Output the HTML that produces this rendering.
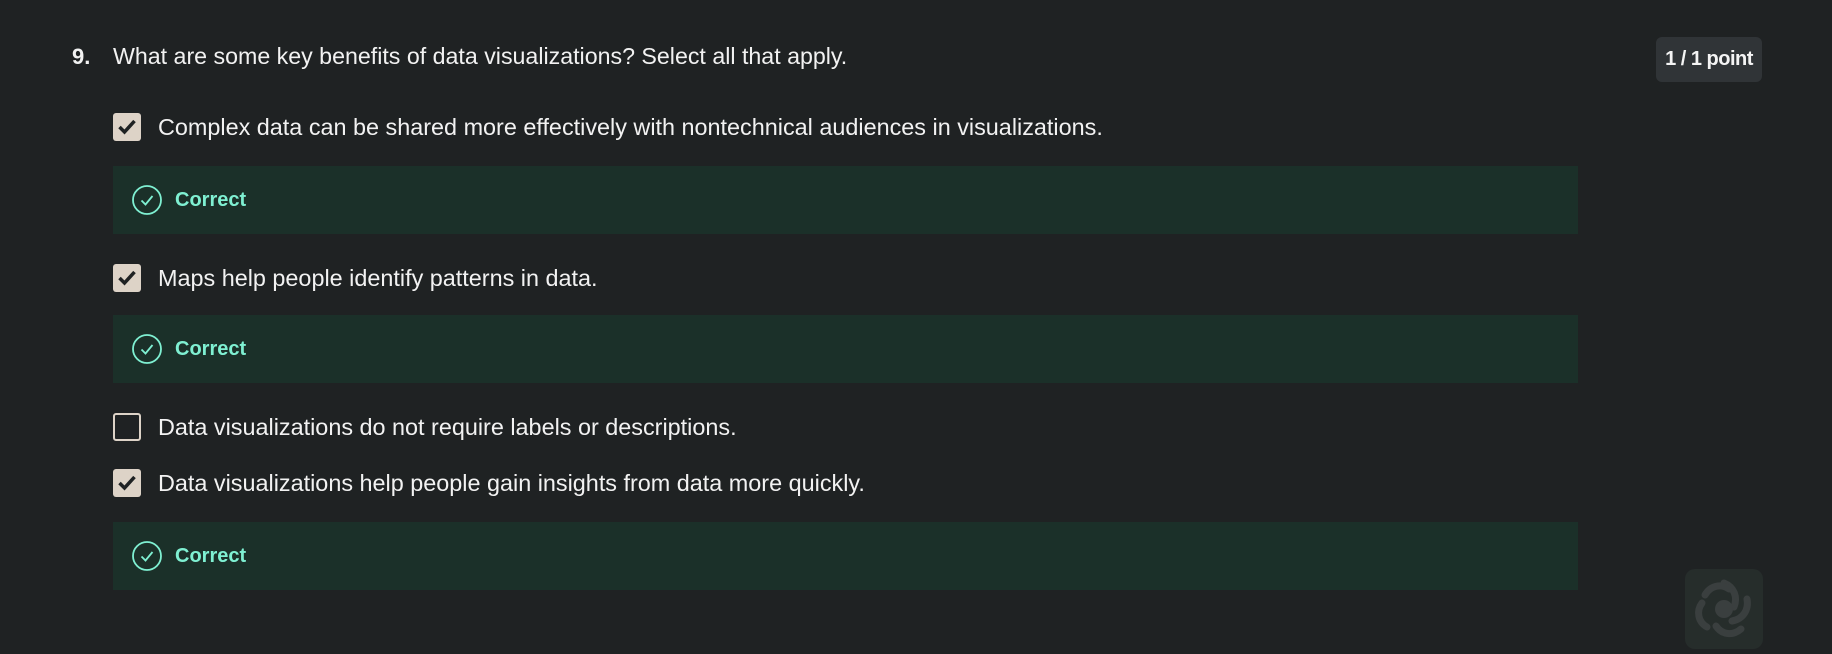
<!DOCTYPE html>
<html><head><meta charset="utf-8"><style>
html,body{margin:0;padding:0;}
body{width:1832px;height:636px;background:#1f2223;position:relative;overflow:hidden;font-family:"Liberation Sans",sans-serif;color:#f2f2f2;}
.a{position:absolute;}
.q{font-size:23.2px;line-height:30px;}
.num{left:72px;top:42px;font-weight:bold;font-size:22px;line-height:30px;}
.cb{left:113px;width:28px;height:28px;border-radius:3px;box-sizing:border-box;}
.cb.on{background:#ddd3c7;}
.cb.off{border:2.5px solid #ddd3c7;}
.opt{left:158px;font-size:23.4px;line-height:30px;}
.box{left:113px;width:1465px;height:68px;background:#1b3029;}
.box svg{position:absolute;left:18px;top:18px;}
.box span{position:absolute;left:62px;top:20px;font-size:20px;font-weight:bold;color:#7ff0d2;line-height:28px;}
.badge{left:1656px;top:37px;width:106px;height:45px;background:#303437;border-radius:6px;font-weight:bold;font-size:20px;line-height:45px;text-align:center;color:#f4f4f4;letter-spacing:-0.5px;}
.logo{left:1685px;top:569px;width:78px;height:80px;background:#262d2b;border-radius:10px;}
</style></head><body>
<div class="a num">9.</div>
<div class="a q" style="left:113px;top:41px;">What are some key benefits of data visualizations? Select all that apply.</div>
<div class="a badge">1 / 1 point</div>

<div class="a cb on" style="top:113px;"><svg width="28" height="28"><path d="M6.5 14l5 5 10-11" stroke="#1f2223" stroke-width="3.5" fill="none"/></svg></div>
<div class="a opt" style="top:112px;">Complex data can be shared more effectively with nontechnical audiences in visualizations.</div>
<div class="a box" style="top:166px;"><svg width="32" height="32"><circle cx="16" cy="16" r="14" stroke="#7ff0d2" stroke-width="1.8" fill="none"/><path d="M10.5 16.5l4 4 7-8.5" stroke="#7ff0d2" stroke-width="1.8" fill="none"/></svg><span>Correct</span></div>

<div class="a cb on" style="top:264px;"><svg width="28" height="28"><path d="M6.5 14l5 5 10-11" stroke="#1f2223" stroke-width="3.5" fill="none"/></svg></div>
<div class="a opt" style="top:263px;">Maps help people identify patterns in data.</div>
<div class="a box" style="top:315px;"><svg width="32" height="32"><circle cx="16" cy="16" r="14" stroke="#7ff0d2" stroke-width="1.8" fill="none"/><path d="M10.5 16.5l4 4 7-8.5" stroke="#7ff0d2" stroke-width="1.8" fill="none"/></svg><span>Correct</span></div>

<div class="a cb off" style="top:413px;"></div>
<div class="a opt" style="top:412px;">Data visualizations do not require labels or descriptions.</div>

<div class="a cb on" style="top:469px;"><svg width="28" height="28"><path d="M6.5 14l5 5 10-11" stroke="#1f2223" stroke-width="3.5" fill="none"/></svg></div>
<div class="a opt" style="top:468px;">Data visualizations help people gain insights from data more quickly.</div>
<div class="a box" style="top:522px;"><svg width="32" height="32"><circle cx="16" cy="16" r="14" stroke="#7ff0d2" stroke-width="1.8" fill="none"/><path d="M10.5 16.5l4 4 7-8.5" stroke="#7ff0d2" stroke-width="1.8" fill="none"/></svg><span>Correct</span></div>

<div class="a logo"><svg width="78" height="80" viewBox="0 0 78 80"><g stroke="#3a3f3f" stroke-width="7" fill="none" stroke-linecap="round"><path d="M39 14c10 4 14 14 10 24"/><path d="M62 30c2 11-4 20-15 22"/><path d="M56 60c-8 7-19 6-25-3"/><path d="M22 58c-9-5-11-16-5-24"/><path d="M20 26c5-9 16-12 24-6"/></g><circle cx="39" cy="40" r="9" fill="#3a3f3f"/></svg></div>
</body></html>
